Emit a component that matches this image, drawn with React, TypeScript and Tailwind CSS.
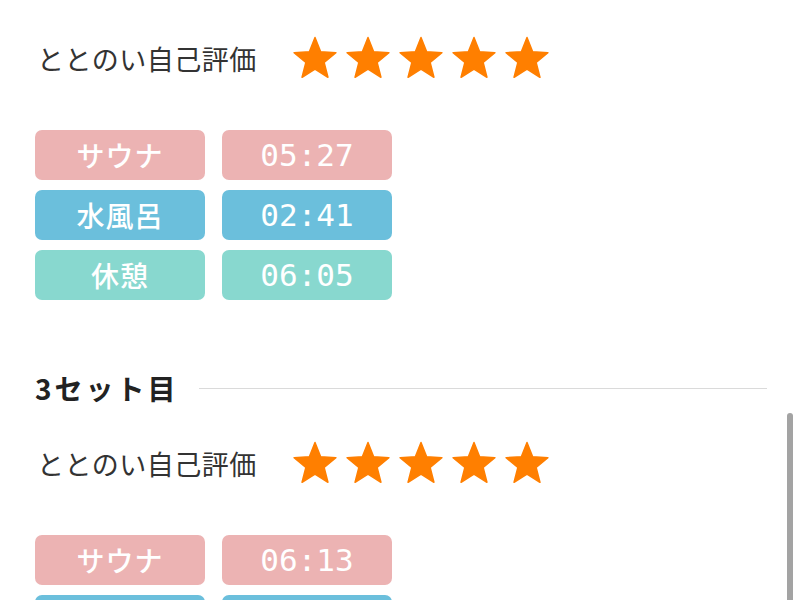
import React from "react";

const jp = { fontFamily: '"Noto Sans CJK JP", "Noto Sans", sans-serif' };
const mono = { fontFamily: '"DejaVu Sans Mono", "Liberation Mono", monospace' };

function Star() {
  const pts: string[] = [];
  for (let i = 0; i < 10; i++) {
    const r = i % 2 === 0 ? 22 : 9.6;
    const a = (Math.PI / 5) * i - Math.PI / 2;
    pts.push(`${(22 + r * Math.cos(a)).toFixed(2)},${(23.5 + r * Math.sin(a)).toFixed(2)}`);
  }
  return (
    <svg width="44" height="44" viewBox="0 0 44 44">
      <polygon points={pts.join(" ")} fill="#ff7f00" stroke="#ff7f00" strokeWidth="1.5" strokeLinejoin="round" />
    </svg>
  );
}

function Rating() {
  return (
    <div className="flex items-center h-[44px]">
      <div className="w-[256px] pl-[2px] text-[27px] text-[#333333] leading-none tracking-[0.5px]" style={jp}>
        ととのい自己評価
      </div>
      <div className="flex gap-[9px] ml-[2px]">
        <Star />
        <Star />
        <Star />
        <Star />
        <Star />
      </div>
    </div>
  );
}

type Row = { label: string; time: string; bg: string };

function Badge({ children, bg, isMono }: { children: React.ReactNode; bg: string; isMono?: boolean }) {
  return (
    <div
      className={`h-[50px] rounded-[7px] flex items-center justify-center text-white leading-none ${bg} ${isMono ? "text-[31px]" : "text-[28px] font-medium tracking-[1px]"}`}
      style={isMono ? mono : jp}
    >
      {children}
    </div>
  );
}

function Grid({ rows }: { rows: Row[] }) {
  return (
    <div className="grid grid-cols-[170px_170px] gap-x-[17px] gap-y-[10px] mt-[50px]">
      {rows.map((r) => (
        <React.Fragment key={r.label + r.time}>
          <Badge bg={r.bg}>{r.label}</Badge>
          <Badge bg={r.bg} isMono>
            {r.time}
          </Badge>
        </React.Fragment>
      ))}
    </div>
  );
}

const PINK = "bg-[#ecb3b3]";
const BLUE = "bg-[#6bbfdc]";
const TEAL = "bg-[#88d8cf]";

export default function App() {
  return (
    <div className="relative w-[800px] h-[600px] overflow-hidden bg-white">
      <div className="pl-[35px] pr-[33px] pt-[36px]">
        <Rating />
        <Grid
          rows={[
            { label: "サウナ", time: "05:27", bg: PINK },
            { label: "水風呂", time: "02:41", bg: BLUE },
            { label: "休憩", time: "06:05", bg: TEAL },
          ]}
        />
        <div className="flex items-center mt-[70px] h-[36px]">
          <div className="text-[28px] font-bold text-[#222222] leading-none tracking-[3px]" style={jp}>
            3セット目
          </div>
          <div className="flex-1 h-px bg-[#dadada] ml-[20px]" />
        </div>
        <div className="mt-[35px]">
          <Rating />
        </div>
        <Grid
          rows={[
            { label: "サウナ", time: "06:13", bg: PINK },
            { label: "水風呂", time: "02:30", bg: BLUE },
            { label: "休憩", time: "05:00", bg: TEAL },
          ]}
        />
      </div>
      <div className="absolute right-[7px] top-[413px] w-[6px] h-[200px] rounded-full bg-[#a3a3a3]" />
    </div>
  );
}
